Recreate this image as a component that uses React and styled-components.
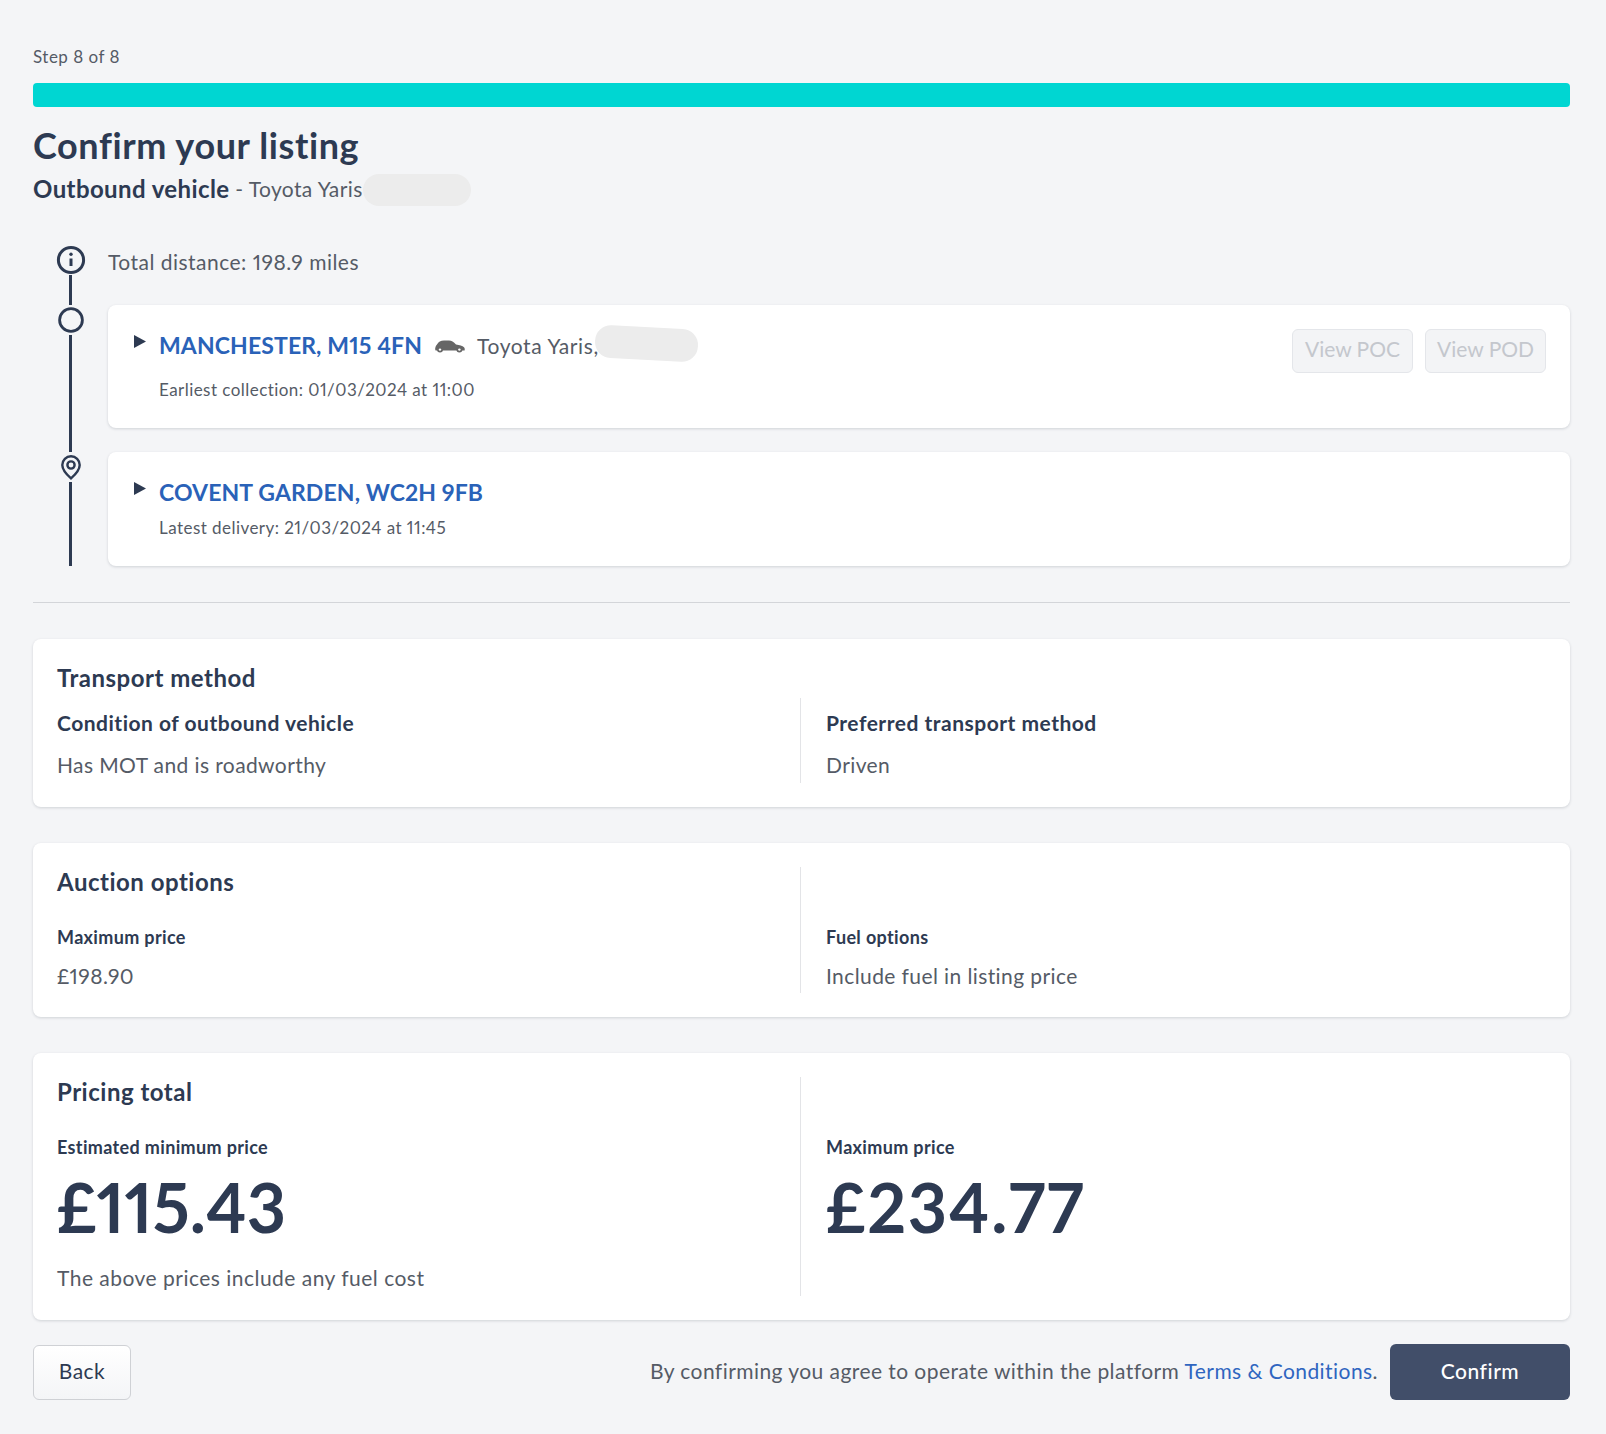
import React from "react";
import styled, { createGlobalStyle } from "styled-components";

const GlobalStyle = createGlobalStyle`
  body {
    margin: 0;
    background: #f4f5f7;
    font-family: "Lato", "Noto Sans", sans-serif;
    font-variant-numeric: proportional-nums;
    color: #555b66;
  }
`;

const App = () => {
  return (
    <>
      <GlobalStyle />
      <Page>
        <StepLabel>Step 8 of 8</StepLabel>
        <ProgressBar />
        <Title>Confirm your listing</Title>
        <Subtitle>
          <strong>Outbound vehicle</strong> - Toyota Yaris
          <Redacted />
        </Subtitle>

        <Timeline>
          <Stop>
            <Rail>
              <InfoIcon />
              <RailLine />
            </Rail>
            <Distance>Total distance: 198.9 miles</Distance>
          </Stop>

          <Stop>
            <Rail>
              <CircleIcon />
              <RailLine />
            </Rail>
            <StopBody>
              <LegCard>
                <Caret />
                <LegInfo>
                  <LegTitle>
                    <Place>MANCHESTER, M15 4FN</Place>
                    <CarIcon />
                    <Vehicle>Toyota Yaris,</Vehicle>
                    <RedactedTilted />
                  </LegTitle>
                  <LegDate>Earliest collection: 01/03/2024 at 11:00</LegDate>
                </LegInfo>
                <LegActions>
                  <GhostButton disabled>View POC</GhostButton>
                  <GhostButton disabled>View POD</GhostButton>
                </LegActions>
              </LegCard>
            </StopBody>
          </Stop>

          <Stop>
            <Rail>
              <PinIcon />
              <RailLine />
            </Rail>
            <StopBody $last>
              <LegCard $short>
                <Caret />
                <LegInfo>
                  <LegTitle>
                    <Place>COVENT GARDEN, WC2H 9FB</Place>
                  </LegTitle>
                  <LegDate $tight>Latest delivery: 21/03/2024 at 11:45</LegDate>
                </LegInfo>
              </LegCard>
            </StopBody>
          </Stop>
        </Timeline>

        <Divider />

        <Card>
          <CardTitle>Transport method</CardTitle>
          <Columns>
            <Column>
              <LabelLarge>Condition of outbound vehicle</LabelLarge>
              <Value>Has MOT and is roadworthy</Value>
            </Column>
            <Column $right>
              <LabelLarge>Preferred transport method</LabelLarge>
              <Value>Driven</Value>
            </Column>
          </Columns>
        </Card>

        <Card $gap>
          <Columns $full>
            <Column $pad>
              <CardTitle>Auction options</CardTitle>
              <Label>Maximum price</Label>
              <Value>£198.90</Value>
            </Column>
            <Column $right $pad>
              <TitleSpacer />
              <Label>Fuel options</Label>
              <Value>Include fuel in listing price</Value>
            </Column>
          </Columns>
        </Card>

        <Card $gap>
          <Columns $full>
            <Column $pad>
              <CardTitle>Pricing total</CardTitle>
              <Label>Estimated minimum price</Label>
              <Price>£115.43</Price>
              <Note>The above prices include any fuel cost</Note>
            </Column>
            <Column $right $pad>
              <TitleSpacer />
              <Label>Maximum price</Label>
              <Price $spread>£234.77</Price>
            </Column>
          </Columns>
        </Card>

        <Footer>
          <BackButton>Back</BackButton>
          <Terms>
            By confirming you agree to operate within the platform{" "}
            <TermsLink href="#">Terms &amp; Conditions</TermsLink>.
          </Terms>
          <ConfirmButton>Confirm</ConfirmButton>
        </Footer>
      </Page>
    </>
  );
};

export default App;

const InfoIcon = () => (
  <svg width="30" height="30" viewBox="0 0 30 30" fill="none" stroke="#2d3a52" style={{ flexShrink: 0 }}>
    <circle cx="15" cy="15" r="12.6" strokeWidth="3" />
    <path d="M15 13.5v7.5" strokeWidth="3" />
    <circle cx="15" cy="9.3" r="1.7" fill="#2d3a52" stroke="none" />
  </svg>
);

const CircleIcon = () => (
  <CircleMark width="26" height="26" viewBox="0 0 26 26" fill="none" stroke="#2d3a52">
    <circle cx="13" cy="13" r="11.4" strokeWidth="2.8" />
  </CircleMark>
);

const PinIcon = () => (
  <PinMark width="20" height="25" viewBox="0 0 20 25" fill="none" stroke="#2d3a52" strokeWidth="2.4">
    <path d="M10 23.4C6.6 20.4 1.3 15.6 1.3 10a8.7 8.7 0 0 1 17.4 0c0 5.6-5.3 10.4-8.7 13.4z" />
    <circle cx="10" cy="10" r="3.6" />
  </PinMark>
);

const CarIcon = () => (
  <CarMark width="30" height="13" viewBox="0 0 30 13">
    <path
      fill="#666"
      d="M0.2 9.6C0 7.4.8 5.8 2 4.4 3.4 2.2 5.6.5 9 .5h5c2.6 0 4.6 1.6 7 3.9 3.4.5 6.6 1.3 8 2.8.8.9.9 2 .6 3.2H.6z"
    />
    <circle cx="5" cy="9.6" r="3" fill="#666" />
    <circle cx="5" cy="9.6" r="1.2" fill="#fff" />
    <circle cx="24.4" cy="9.6" r="3" fill="#666" />
    <circle cx="24.4" cy="9.6" r="1.2" fill="#fff" />
  </CarMark>
);

const Caret = () => (
  <CaretMark width="12" height="13" viewBox="0 0 12 13" fill="#2d3a52">
    <path d="M0 0l12 6.5L0 13z" />
  </CaretMark>
);

const Page = styled.div`
  box-sizing: border-box;
  height: 1434px;
  padding: 47px 36px 0 33px;
`;

const StepLabel = styled.div`
  font-size: 17px;
  line-height: 20px;
  letter-spacing: 0.5px;
`;

const ProgressBar = styled.div`
  height: 24px;
  margin-top: 16px;
  background: #00d6d2;
  border-radius: 4px;
`;

const Title = styled.h1`
  margin: 18px 0 0;
  font-size: 36px;
  line-height: 40px;
  font-weight: 700;
  letter-spacing: 0.6px;
  color: #2d3a52;
`;

const Subtitle = styled.div`
  display: flex;
  align-items: center;
  height: 32px;
  margin-top: 7px;
  font-size: 21px;
  letter-spacing: 0.4px;
  white-space: pre;

  strong {
    font-size: 24px;
    font-weight: 700;
    color: #2d3a52;
  }
`;

const Redacted = styled.span`
  display: inline-block;
  width: 108px;
  height: 32px;
  margin-top: 4px;
  border-radius: 16px;
  background: #ececec;
`;

const RedactedTilted = styled(Redacted)`
  width: 103px;
  height: 33px;
  margin: -4px 0 0 -4px;
  transform: rotate(3deg);
`;

const Timeline = styled.div`
  margin-top: 41px;
`;

const Stop = styled.div`
  display: flex;
`;

const Rail = styled.div`
  display: flex;
  flex-direction: column;
  align-items: center;
  flex: 0 0 75px;
`;

const RailLine = styled.div`
  flex: 1;
  width: 3px;
  background: #2d3a52;
`;

const CircleMark = styled.svg`
  flex-shrink: 0;
  margin: 2px 0 2px;
`;

const PinMark = styled.svg`
  flex-shrink: 0;
  margin: 3px 0 2px;
`;

const Distance = styled.div`
  height: 60px;
  padding-top: 5px;
  box-sizing: border-box;
  font-size: 21px;
  line-height: 24px;
  letter-spacing: 0.48px;
`;

const StopBody = styled.div`
  flex: 1;
  padding-bottom: ${(props) => (props.$last ? "0" : "24px")};
`;

const LegCard = styled.div`
  display: flex;
  align-items: flex-start;
  box-sizing: border-box;
  height: ${(props) => (props.$short ? "114px" : "123px")};
  padding: 24px 24px 0 26px;
  background: #fff;
  border-radius: 8px;
  box-shadow: 0 1px 3px rgba(20, 30, 50, 0.16);
`;

const CaretMark = styled.svg`
  flex-shrink: 0;
  margin: 6px 13px 0 0;
`;

const LegInfo = styled.div`
  flex: 1;
`;

const LegTitle = styled.div`
  display: flex;
  align-items: center;
  height: 32px;
`;

const Place = styled.span`
  font-size: 23px;
  font-weight: 700;
  letter-spacing: 0.11px;
  color: #2a62b8;
`;

const CarMark = styled.svg`
  flex-shrink: 0;
  margin: 2px 12px 0 13px;
`;

const Vehicle = styled.span`
  font-size: 21px;
  letter-spacing: 0.6px;
`;

const LegDate = styled.div`
  margin-top: ${(props) => (props.$tight ? "10px" : "19px")};
  font-size: 17px;
  line-height: 20px;
  letter-spacing: 0.45px;
`;

const LegActions = styled.div`
  display: flex;
  gap: 12px;
`;

const GhostButton = styled.button`
  width: 121px;
  height: 44px;
  padding: 0 0 6px;
  font: inherit;
  font-size: 21px;
  color: #c4c7cd;
  background: #f3f4f6;
  border: 1px solid #e4e6ea;
  border-radius: 6px;
`;

const Divider = styled.hr`
  height: 1px;
  margin: 36px 0;
  border: 0;
  background: #d3d5d9;
`;

const Card = styled.section`
  margin-top: ${(props) => (props.$gap ? "36px" : "0")};
  padding: 24px 0 24px 24px;
  background: #fff;
  border-radius: 8px;
  box-shadow: 0 1px 3px rgba(20, 30, 50, 0.16);
`;

const CardTitle = styled.h2`
  margin: 0;
  font-size: 24px;
  line-height: 30px;
  font-weight: 700;
  letter-spacing: 0.5px;
  color: #2d3a52;
`;

const TitleSpacer = styled.div`
  height: 30px;
`;

const Columns = styled.div`
  display: grid;
  grid-template-columns: 743px 1fr;
  margin-top: ${(props) => (props.$full ? "0" : "5px")};
`;

const Column = styled.div`
  min-height: 85px;
  padding-left: ${(props) => (props.$right ? "25px" : "0")};
  padding-bottom: ${(props) => (props.$pad ? "4px" : "0")};
  border-left: ${(props) => (props.$right ? "1px solid #e3e4e7" : "none")};
`;

const LabelLarge = styled.div`
  margin-top: 13px;
  font-size: 21px;
  line-height: 24px;
  font-weight: 700;
  letter-spacing: 0.5px;
  color: #2d3a52;
`;

const Label = styled.div`
  margin-top: 31px;
  font-size: 18px;
  line-height: 18px;
  font-weight: 700;
  letter-spacing: 0.35px;
  color: #2d3a52;
`;

const Value = styled.div`
  margin-top: 17px;
  font-size: 21px;
  line-height: 26px;
  letter-spacing: 0.4px;
`;

const Price = styled.div`
  margin-top: 12px;
  font-size: 68px;
  line-height: 78px;
  font-weight: 700;
  letter-spacing: ${(props) => (props.$spread ? "1.7px" : "0")};
  color: #2d3a52;
`;

const Note = styled.div`
  margin: 19px 0 1px;
  font-size: 21px;
  line-height: 26px;
  letter-spacing: 0.48px;
`;

const Footer = styled.div`
  display: flex;
  align-items: center;
  margin-top: 24px;
`;

const BackButton = styled.button`
  width: 98px;
  height: 55px;
  padding: 0 0 3px;
  font: inherit;
  font-size: 21px;
  letter-spacing: 0.5px;
  color: #2d3a52;
  background: linear-gradient(#fff, #f4f5f7);
  border: 1px solid #cfd1d5;
  border-radius: 6px;
`;

const Terms = styled.div`
  flex: 1;
  margin-right: 12px;
  padding-bottom: 4px;
  text-align: right;
  font-size: 21px;
  letter-spacing: 0.44px;
`;

const TermsLink = styled.a`
  color: #2f65c0;
  text-decoration: none;
`;

const ConfirmButton = styled.button`
  width: 180px;
  height: 56px;
  padding: 0 0 3px;
  font: inherit;
  font-size: 21px;
  font-weight: 500;
  letter-spacing: 0.5px;
  color: #fff;
  background: #414e69;
  border: 0;
  border-radius: 6px;
`;
